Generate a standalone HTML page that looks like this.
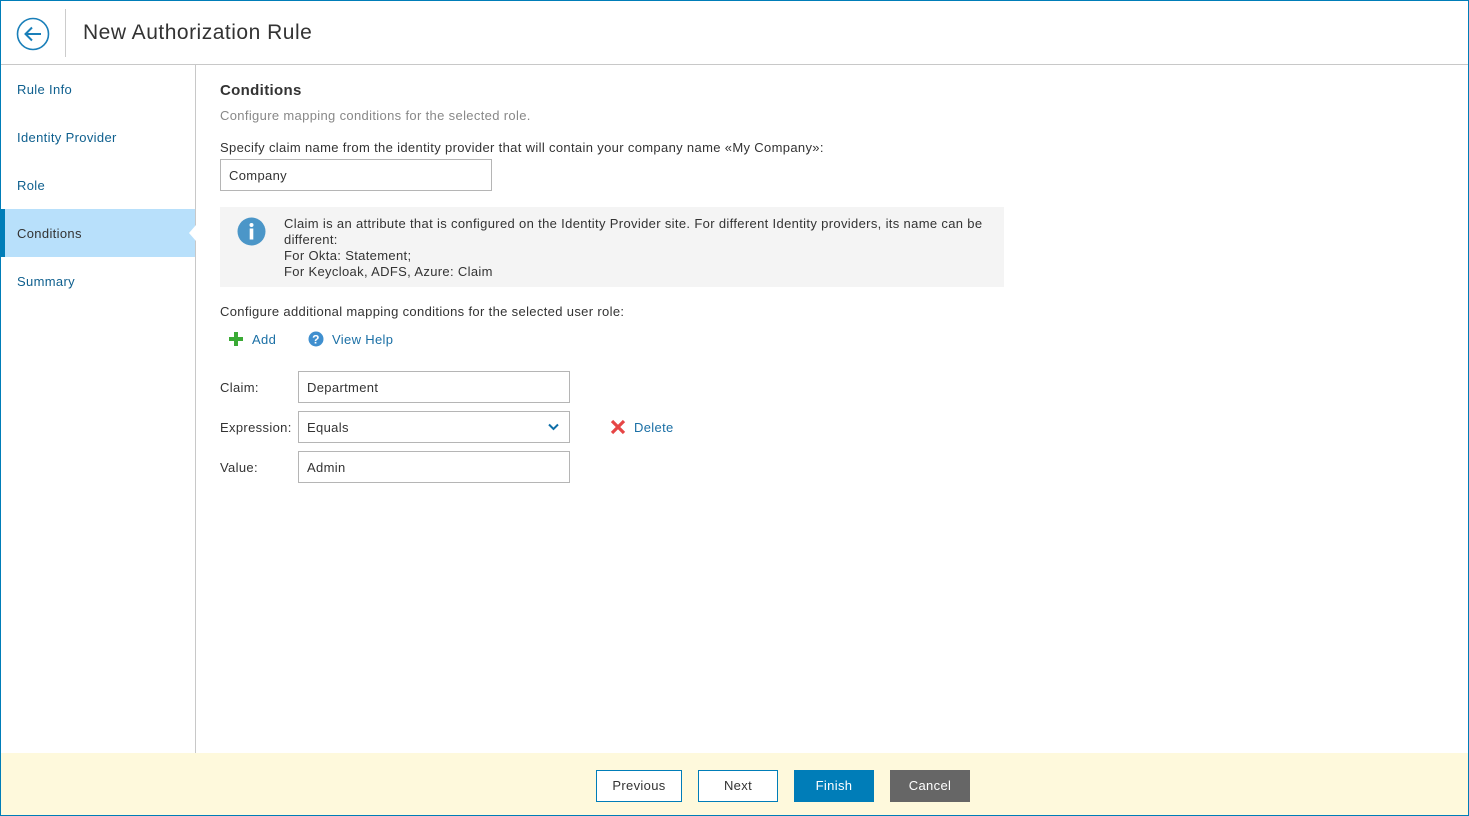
<!DOCTYPE html>
<html><head><style>
*{box-sizing:border-box;margin:0;padding:0}
body{width:1469px;height:816px;font-family:"Liberation Sans",sans-serif;font-size:13px;color:#333;background:#fff;position:relative;overflow:hidden;letter-spacing:0.34px}
.frame{position:absolute;inset:0;border:1px solid #007db8}
.hdr{position:absolute;left:1px;top:1px;right:1px;height:64px;border-bottom:1px solid #c8c8c8}
.hdr .sep{position:absolute;left:64px;top:8px;width:1px;height:48px;background:#ccc}
.hdr h1{position:absolute;left:82px;top:20px;font-weight:normal;font-size:21px;color:#333;letter-spacing:0.5px}
.side{position:absolute;left:1px;top:65px;width:195px;bottom:62px;border-right:1px solid #c8c8c8}
.side div{height:48px;line-height:48px;padding-left:16px;color:#0e5f8e;font-size:13px;padding-top:1px}
.side .act{background:#b8e0fb;color:#333;border-left:4px solid #007db8;padding-left:12px;position:relative}
.side .act:after{content:"";position:absolute;right:-1px;top:16px;border:8px solid transparent;border-right-color:#fff;border-right-width:7px}
.abs{position:absolute}
.inp{position:absolute;border:1px solid #b5b5b5;height:32px;line-height:32px;padding-left:8px;background:#fff}
.foot{position:absolute;left:1px;right:1px;bottom:1px;height:62px;background:#fef9dc}
.btn{position:absolute;top:17px;height:32px;line-height:30px;text-align:center;font-size:13px}
</style></head><body>
<div class="frame"></div>
<div class="hdr">
<svg class="abs" style="left:15px;top:16px" width="34" height="34" viewBox="0 0 34 34"><circle cx="17" cy="17" r="15.5" fill="none" stroke="#1a7fb9" stroke-width="1.6"/><path d="M25 17H10M16 10.5 9.5 17 16 23.5" fill="none" stroke="#1a7fb9" stroke-width="2"/></svg>
<div class="sep"></div><h1>New Authorization Rule</h1></div>
<div class="side"><div>Rule Info</div><div>Identity Provider</div><div>Role</div><div class="act">Conditions</div><div>Summary</div></div>
<div class="abs" style="left:220px;top:82px;font-size:15px;font-weight:bold">Conditions</div>
<div class="abs" style="left:220px;top:108px;color:#888">Configure mapping conditions for the selected role.</div>
<div class="abs" style="left:220px;top:140px">Specify claim name from the identity provider that will contain your company name «My Company»:</div>
<div class="inp" style="left:220px;top:159px;width:272px">Company</div>
<div class="abs" style="left:220px;top:207px;width:784px;height:80px;background:#f4f4f4"></div>
<svg class="abs" style="left:237px;top:217px" width="29" height="29" viewBox="0 0 29 29"><circle cx="14.5" cy="14.5" r="14" fill="#4b96c8"/><circle cx="14.5" cy="8" r="2" fill="#fff"/><rect x="12.7" y="11.5" width="3.6" height="11" fill="#fff"/></svg>
<div class="abs" style="left:284px;top:216px;line-height:16px;width:710px">Claim is an attribute that is configured on the Identity Provider site. For different Identity providers, its name can be different:<br>For Okta: Statement;<br>For Keycloak, ADFS, Azure: Claim</div>
<div class="abs" style="left:220px;top:304px">Configure additional mapping conditions for the selected user role:</div>
<svg class="abs" style="left:229px;top:332px" width="14" height="14"><path d="M5 0h4v5h5v4H9v5H5V9H0V5h5z" fill="#3aaa35"/></svg>
<div class="abs" style="left:252px;top:332px;color:#1a6fa5">Add</div>
<svg class="abs" style="left:308px;top:331px" width="16" height="16" viewBox="0 0 16 16"><circle cx="8" cy="8" r="7.5" fill="#3f8fcf"/><text x="8" y="12.5" font-size="12" font-weight="bold" fill="#fff" text-anchor="middle" font-family="Liberation Sans">?</text></svg>
<div class="abs" style="left:332px;top:332px;color:#1a6fa5">View Help</div>
<div class="abs" style="left:220px;top:380px">Claim:</div>
<div class="inp" style="left:298px;top:371px;width:272px">Department</div>
<div class="abs" style="left:220px;top:420px">Expression:</div>
<div class="inp" style="left:298px;top:411px;width:272px">Equals</div>
<svg class="abs" style="left:548px;top:423px" width="11" height="8"><path d="M1 1.5 5.5 6 10 1.5" fill="none" stroke="#0e6fa8" stroke-width="2"/></svg>
<svg class="abs" style="left:610px;top:419px" width="16" height="16"><path d="M2 2 14 14M14 2 2 14" stroke="#e64545" stroke-width="3.2"/></svg>
<div class="abs" style="left:634px;top:420px;color:#1a6fa5">Delete</div>
<div class="abs" style="left:220px;top:460px">Value:</div>
<div class="inp" style="left:298px;top:451px;width:272px">Admin</div>
<div class="foot">
<div class="btn" style="left:595px;width:86px;border:1px solid #007db8;background:#fff">Previous</div>
<div class="btn" style="left:697px;width:80px;border:1px solid #007db8;background:#fff">Next</div>
<div class="btn" style="left:793px;width:80px;background:#007db8;color:#fff;line-height:32px">Finish</div>
<div class="btn" style="left:889px;width:80px;background:#666;color:#fff;line-height:32px">Cancel</div>
</div>
</body></html>
